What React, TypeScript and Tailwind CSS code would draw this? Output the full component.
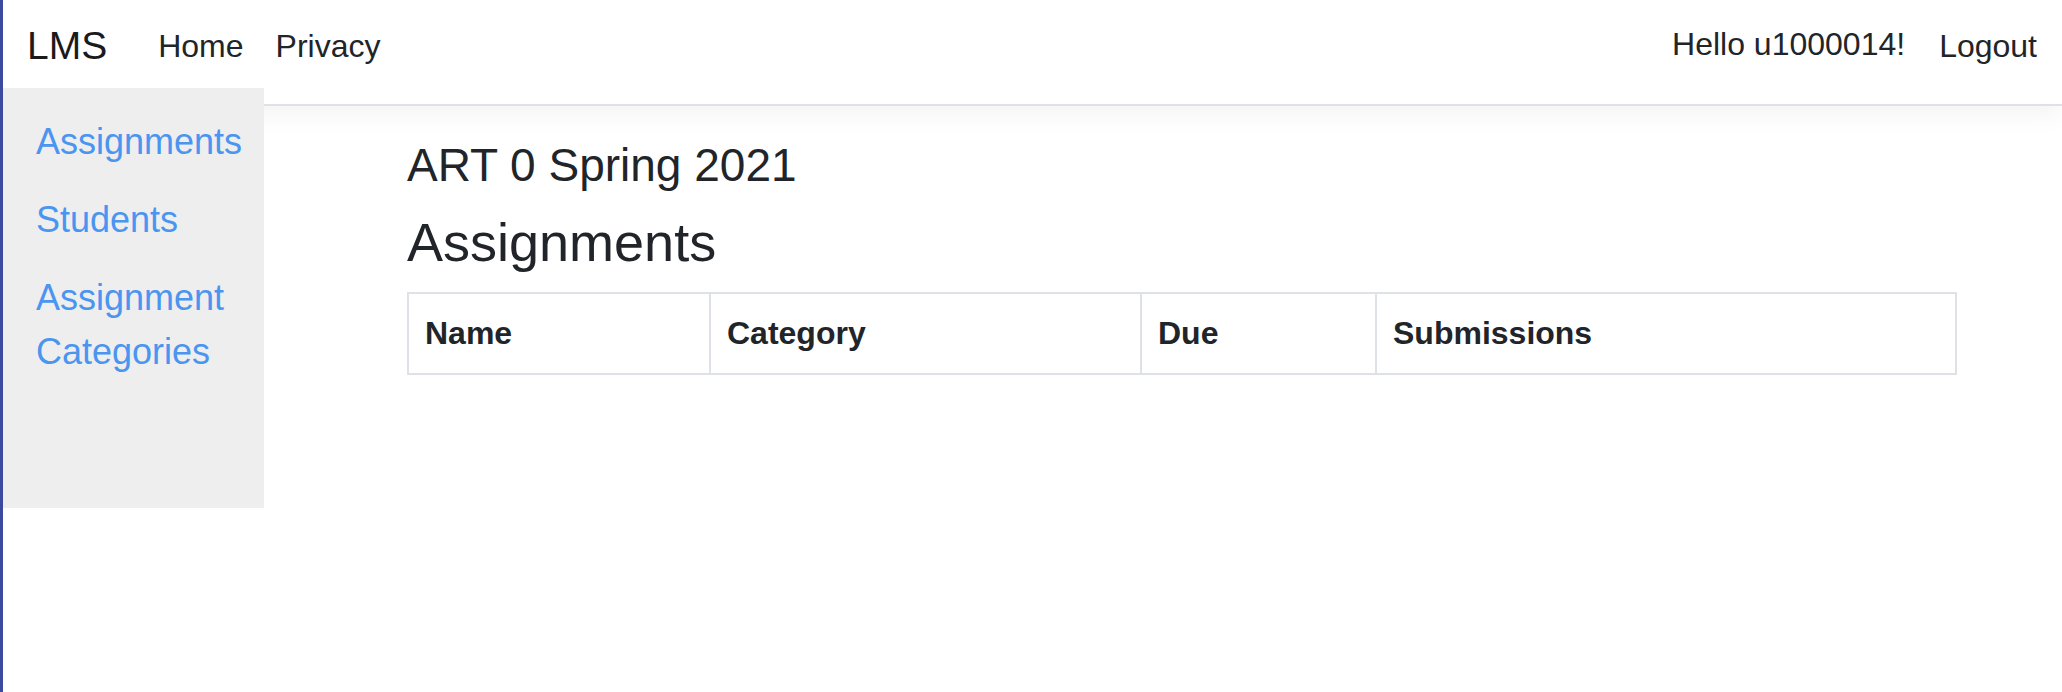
const navLinks = ["Home", "Privacy"];
const sideLinks = ["Assignments", "Students", "Assignment Categories"];

const columns = [
  { label: "Name", width: "w-[300px]", first: true },
  { label: "Category", width: "w-[431px]" },
  { label: "Due", width: "w-[235px]" },
  { label: "Submissions", width: "w-[580px]" },
];

const Header = () => (
  <header className="relative flex items-start h-[106px] pt-[22px] pl-[24px] pr-[25px] bg-white border-b-2 border-b-[#dee2e6] shadow-[0_8px_24px_rgba(0,0,0,0.05)]">
    <a className="text-[39px] leading-[48px] text-[#1a1a1a] mr-[35px]">LMS</a>
    <nav className="flex">
      {navLinks.map((link) => (
        <a key={link} className="px-[16px] text-[32px] leading-[48px] text-[#212529]">
          {link}
        </a>
      ))}
    </nav>
    <div className="ml-auto flex items-start">
      <span className="mt-[-2px] text-[32px] leading-[48px] text-[#212529]">Hello u1000014!</span>
      <a className="ml-[34px] text-[32px] leading-[48px] text-[#212529]">Logout</a>
    </div>
  </header>
);

const Sidebar = () => (
  <aside className="w-[261px] h-[420px] shrink-0 bg-[#eeeeee] pt-[27px] pl-[33px] pr-[10px] flex flex-col gap-[24px]">
    {sideLinks.map((link) => (
      <a key={link} className="text-[36px] leading-[54px] text-[#4a95f0]">
        {link}
      </a>
    ))}
  </aside>
);

const AssignmentsTable = () => (
  <div className="flex w-[1550px] border-2 border-[#dee2e6]">
    {columns.map((col) => (
      <div
        key={col.label}
        className={`${col.width} ${col.first ? "" : "border-l-2 border-[#dee2e6]"} pl-[16px] pt-[15px] pb-[16px] text-[32px] leading-[48px] font-bold text-[#212529]`}
      >
        {col.label}
      </div>
    ))}
  </div>
);

export default function App() {
  return (
    <div
      className="h-[692px] border-l-[3px] border-l-[#3b4a9c] bg-white overflow-hidden"
      style={{ fontFamily: '"Liberation Sans", Arial, sans-serif' }}
    >
      <Header />
      <div className="relative z-10 -mt-[18px] flex">
        <Sidebar />
        <main className="flex-1 pl-[143px] pr-[105px] pt-[50px]">
          <h4 className="text-[46px] leading-[55px] text-[#212529]">ART 0 Spring 2021</h4>
          <h2 className="mt-[17px] mb-[17px] text-[54px] leading-[65px] text-[#212529]">Assignments</h2>
          <AssignmentsTable />
        </main>
      </div>
    </div>
  );
}
